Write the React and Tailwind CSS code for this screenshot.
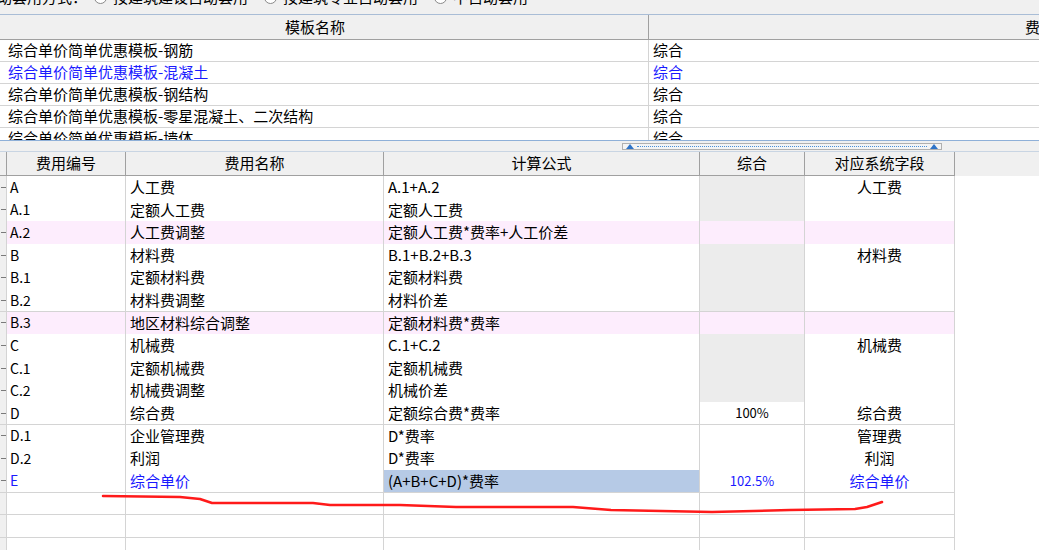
const font = { fontFamily: '"Noto Sans CJK SC", "Liberation Sans", sans-serif' };

const templates = [
  { name: "综合单价简单优惠模板-钢筋", type: "综合" },
  { name: "综合单价简单优惠模板-混凝土", type: "综合", blue: true },
  { name: "综合单价简单优惠模板-钢结构", type: "综合" },
  { name: "综合单价简单优惠模板-零星混凝土、二次结构", type: "综合" },
  { name: "综合单价简单优惠模板-墙体", type: "综合" },
];

const rows = [
  { code: "A", name: "人工费", formula: "A.1+A.2", total: "", field: "人工费", grey: true },
  { code: "A.1", name: "定额人工费", formula: "定额人工费", total: "", field: "", grey: true },
  { code: "A.2", name: "人工费调整", formula: "定额人工费*费率+人工价差", total: "", field: "", pink: true },
  { code: "B", name: "材料费", formula: "B.1+B.2+B.3", total: "", field: "材料费", grey: true },
  { code: "B.1", name: "定额材料费", formula: "定额材料费", total: "", field: "", grey: true },
  { code: "B.2", name: "材料费调整", formula: "材料价差", total: "", field: "", grey: true },
  { code: "B.3", name: "地区材料综合调整", formula: "定额材料费*费率", total: "", field: "", pink: true },
  { code: "C", name: "机械费", formula: "C.1+C.2", total: "", field: "机械费", grey: true },
  { code: "C.1", name: "定额机械费", formula: "定额机械费", total: "", field: "", grey: true },
  { code: "C.2", name: "机械费调整", formula: "机械价差", total: "", field: "", grey: true },
  { code: "D", name: "综合费", formula: "定额综合费*费率", total: "100%", field: "综合费" },
  { code: "D.1", name: "企业管理费", formula: "D*费率", total: "", field: "管理费" },
  { code: "D.2", name: "利润", formula: "D*费率", total: "", field: "利润" },
  { code: "E", name: "综合单价", formula: "(A+B+C+D)*费率", total: "102.5%", field: "综合单价", blue: true, selected: true },
];

const Radio = () => (
  <span className="inline-block w-[13px] h-[13px] rounded-full border border-[#8a8a8a] bg-white mr-[6px]" />
);

const TopBar = () => (
  <div className="h-[15px] overflow-hidden bg-[#f0f0f0] border-b border-[#a9bdd6]">
    <div className="flex items-center -mt-[15px] -ml-[18px] text-[15px] leading-[24px] text-black whitespace-nowrap">
      <span className="mr-[7px]">自动套用方式：</span>
      <Radio />
      <span className="mr-[16px]">按建筑建设自动套用</span>
      <Radio />
      <span className="mr-[16px]">按建筑专业自动套用</span>
      <Radio />
      <span>不自动套用</span>
    </div>
  </div>
);

const TemplateTable = () => (
  <div className="h-[125px] overflow-hidden">
    <div className="flex h-[25px] bg-[#f0f0f0] border-b border-[#a0a0a0] text-[15px]">
      <div className="w-[649px] shrink-0 flex items-center justify-center border-r border-[#a0a0a0] pr-[18px]">
        模板名称
      </div>
      <div className="flex-1 flex items-center pl-[376px] whitespace-nowrap">费用类型</div>
    </div>
    {templates.map((t) => (
      <div
        key={t.name}
        className={`flex h-[22px] border-b border-[#d4d4d4] text-[15px] ${t.blue ? "text-[#1a1aff]" : "text-black"}`}
      >
        <div className="w-[649px] shrink-0 flex items-center pl-[8px] border-r border-[#d4d4d4]">{t.name}</div>
        <div className="flex-1 flex items-center pl-[4px]">{t.type}</div>
      </div>
    ))}
  </div>
);

const Splitter = () => (
  <div className="h-[12px] bg-[#f0f0f0] border-t border-[#8fb0d8] border-b border-b-[#c9d5e3] flex items-center">
    <div className="ml-[622px] w-[320px] h-[7px] border border-[#b0b0b0] bg-[#f4f4f4] flex items-center px-[3px] gap-[3px]">
      <svg width="8" height="5" viewBox="0 0 8 5">
        <path d="M0 5 L4 0 L8 5 Z" fill="#2f74c8" />
      </svg>
      <div className="flex-1 border-t border-dotted border-[#4a90d9]" />
      <svg width="8" height="5" viewBox="0 0 8 5">
        <path d="M0 5 L4 0 L8 5 Z" fill="#2f74c8" />
      </svg>
    </div>
  </div>
);

const cols = "grid grid-cols-[7px_119px_258px_316px_105px_150px]";

const FeeTable = () => (
  <div className="text-[15px] text-black">
    <div className={`${cols} h-[24px] bg-[#f0f0f0]`}>
      <div className="border-r border-b border-[#a0a0a0]" />
      {["费用编号", "费用名称", "计算公式", "综合", "对应系统字段"].map((h) => (
        <div key={h} className="flex items-center justify-center border-r border-b border-[#a0a0a0]">
          {h}
        </div>
      ))}
    </div>
    {rows.map((r) => {
      const bg = r.pink ? "bg-[#fdedfd]" : "bg-white";
      const color = r.blue ? "text-[#1a1aff]" : "text-black";
      return (
        <div key={r.code} className={`${cols} h-[22.6px] ${color}`}>
          <div className="relative bg-[#f0f0f0] border-r border-b border-[#d4d4d4] flex items-center">
            <div className="w-[10px] h-px bg-[#7a7a7a] ml-[1px]" />
          </div>
          <div className={`${bg} border-r border-b border-[#d4d4d4] flex items-center pl-[3px] text-[14px]`}>{r.code}</div>
          <div className={`${bg} border-r border-b border-[#d4d4d4] flex items-center pl-[4px]`}>{r.name}</div>
          <div
            className={`${r.selected ? "bg-[#b6cae6]" : bg} border-r border-b border-[#d4d4d4] flex items-center pl-[4px] text-black`}
          >
            {r.formula}
          </div>
          <div
            className={`${r.grey ? "bg-[#ececec]" : bg} border-r border-b border-[#d4d4d4] flex items-center justify-center text-[13px]`}
          >
            {r.total}
          </div>
          <div className={`${bg} border-r border-b border-[#d4d4d4] flex items-center justify-center`}>{r.field}</div>
        </div>
      );
    })}
    {[0, 1, 2].map((i) => (
      <div key={i} className={`${cols} h-[22.6px]`}>
        <div className="bg-[#f0f0f0] border-r border-b border-[#d4d4d4]" />
        <div className="border-r border-b border-[#d4d4d4]" />
        <div className="border-r border-b border-[#d4d4d4]" />
        <div className="border-r border-b border-[#d4d4d4]" />
        <div className="border-r border-b border-[#d4d4d4]" />
        <div className="border-r border-b border-[#d4d4d4]" />
      </div>
    ))}
  </div>
);

export default function App() {
  return (
    <div className="relative w-[1039px] h-[550px] overflow-hidden bg-white" style={font}>
      <TopBar />
      <TemplateTable />
      <Splitter />
      <FeeTable />
      {/* hand-drawn red annotation */}
      <svg className="absolute left-0 top-0 pointer-events-none" width="1039" height="550">
        <polyline
          points="103,496 180,497 200,499 212,503 313,503 330,505 400,505 456,507 573,507 611,510 712,512 790,510 855,509 867,507 882,502"
          fill="none"
          stroke="#ff1a1a"
          strokeWidth="2.5"
          strokeLinejoin="round"
          strokeLinecap="round"
        />
      </svg>
    </div>
  );
}
